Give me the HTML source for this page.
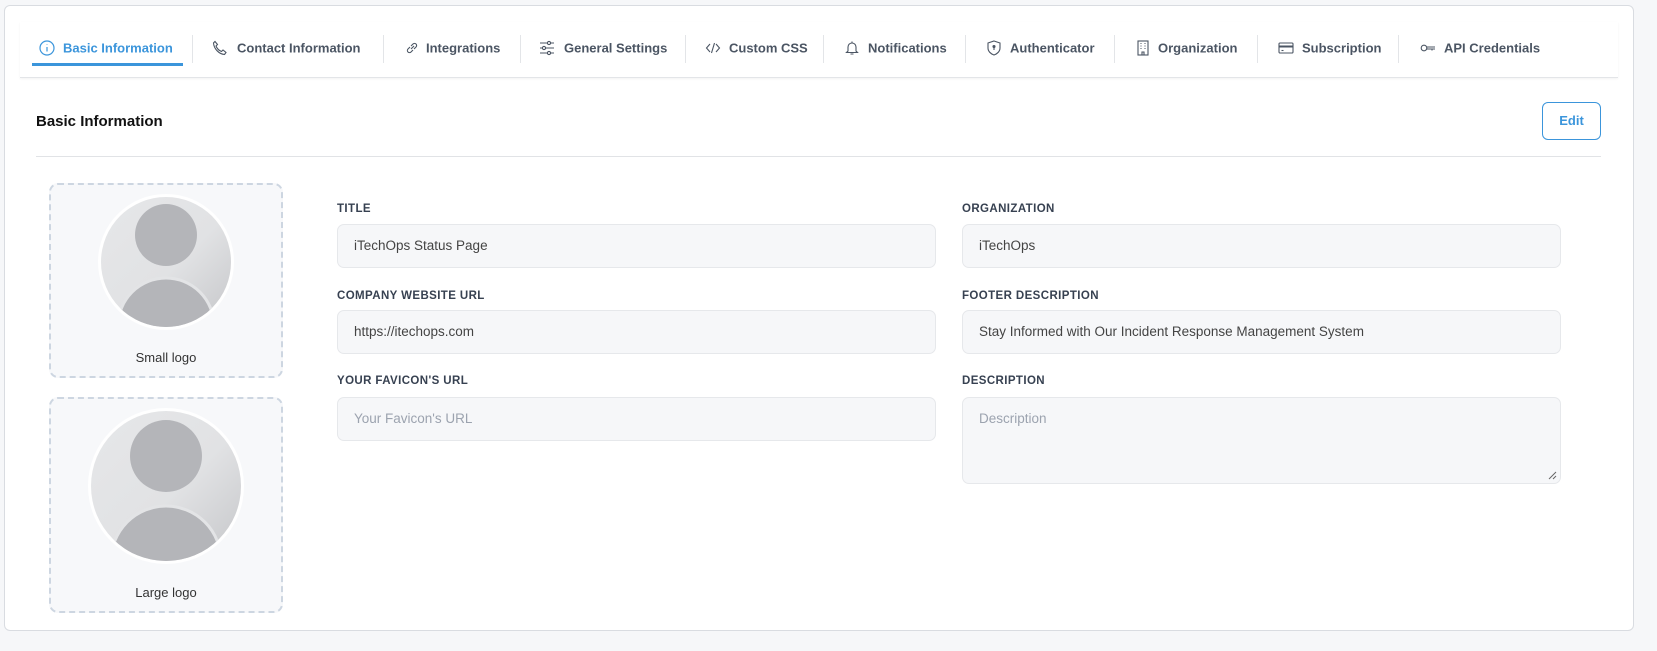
<!DOCTYPE html>
<html><head><meta charset="utf-8"><style>
*{box-sizing:border-box;margin:0;padding:0}
body{width:1657px;height:651px;background:#f6f7f9;font-family:"Liberation Sans",Arial,sans-serif;position:relative;overflow:hidden}
.card{position:absolute;left:4px;top:5px;width:1630px;height:626px;background:#fff;border:1px solid #d9dce1;border-radius:6px}
.tabbar{position:absolute;left:20px;top:22px;width:1598px;height:56px;background:#fff;border-bottom:1px solid #e3e5e8;box-shadow:0 1px 2px rgba(0,0,0,.05)}
.tab{position:absolute;top:48px;font-size:13px;font-weight:600;color:#4b5563;white-space:nowrap;transform:translateY(-50%)}
.ico{position:absolute;top:40px;width:16px;height:16px}
.sep{position:absolute;top:35px;width:1px;height:28px;background:#e3e5e8}
.ul{position:absolute;left:32px;top:63px;width:151px;height:3px;background:#3b95db}
.h{position:absolute;left:36px;top:113px;font-size:15px;font-weight:700;color:#111}
.edit{position:absolute;left:1542px;top:102px;width:59px;height:38px;border:1px solid #3b95db;border-radius:6px;color:#3b95db;font-size:13px;font-weight:700;text-align:center;line-height:36px}
.div{position:absolute;left:36px;top:156px;width:1565px;height:1px;background:#e1e3e6}
.box{position:absolute;left:49px;width:234px;background:#f7f8fa;border:2px dashed #cdd6e1;border-radius:9px}
.cap{position:absolute;left:0;width:100%;text-align:center;font-size:13px;color:#333}
.lbl{position:absolute;font-size:11.5px;font-weight:600;color:#374151;letter-spacing:.4px}
.inp{position:absolute;width:599px;height:44px;background:#f6f7f9;border:1px solid #e6e8eb;border-radius:7px;font-size:13.5px;color:#444;padding-left:16px;line-height:42px}
.ph{color:#9ca3af}
</style></head><body>
<div class="card"></div>
<div class="tabbar"></div>
<div class="ul"></div>
<svg class="ico" style="left:39px" viewBox="0 0 16 16" fill="none" stroke="#3b95db" stroke-width="1.2"><circle cx="8" cy="8" r="7"/><path d="M8 7v4.5M8 4.5v.5"/></svg>
<div class="tab" style="left:63px;color:#3b95db">Basic Information</div>
<div class="sep" style="left:192px"></div>
<svg class="ico" style="left:212px" viewBox="0 0 16 16" fill="none" stroke="#4b5563" stroke-width="1.1"><path d="M3 1.5l2.5 3-1.5 1.5c1 2.5 3 4.5 5.5 5.5l1.5-1.5 3 2.5-1.5 2C7 14 2 9 1.5 3z"/></svg>
<div class="tab" style="left:237px">Contact Information</div>
<div class="sep" style="left:383px"></div>
<svg class="ico" style="left:404px" viewBox="0 0 16 16" fill="none" stroke="#4b5563" stroke-width="1.1"><path d="M7 9l3-3M6 7l-2 2a2 2 0 003 3l2-2M10 9l2-2a2 2 0 00-3-3L7 6"/></svg>
<div class="tab" style="left:426px">Integrations</div>
<div class="sep" style="left:520px"></div>
<svg class="ico" style="left:539px" viewBox="0 0 16 16" fill="none" stroke="#4b5563" stroke-width="1.1"><path d="M1 3h14M1 8h14M1 13h14"/><circle cx="10" cy="3" r="1.6" fill="#fff"/><circle cx="5" cy="8" r="1.6" fill="#fff"/><circle cx="10" cy="13" r="1.6" fill="#fff"/></svg>
<div class="tab" style="left:564px">General Settings</div>
<div class="sep" style="left:685px"></div>
<svg class="ico" style="left:705px" viewBox="0 0 16 16" fill="none" stroke="#4b5563" stroke-width="1.1"><path d="M5 4L1.5 8 5 12M11 4l3.5 4-3.5 4M9.5 3l-3 10"/></svg>
<div class="tab" style="left:729px">Custom CSS</div>
<div class="sep" style="left:823px"></div>
<svg class="ico" style="left:844px" viewBox="0 0 16 16" fill="none" stroke="#4b5563" stroke-width="1.1"><path d="M4 11V7a4 4 0 018 0v4l1.5 1.5h-11zM6.5 14h3M8 1.5v1.5"/></svg>
<div class="tab" style="left:868px">Notifications</div>
<div class="sep" style="left:965px"></div>
<svg class="ico" style="left:986px" viewBox="0 0 16 16" fill="none" stroke="#4b5563" stroke-width="1.1"><path d="M8 1l6 2v5c0 3.5-3 6-6 7-3-1-6-3.5-6-7V3z"/><circle cx="8" cy="6.5" r="1" fill="#4b5563"/><path d="M8 7v3"/></svg>
<div class="tab" style="left:1010px">Authenticator</div>
<div class="sep" style="left:1114px"></div>
<svg class="ico" style="left:1135px" viewBox="0 0 16 16" fill="none" stroke="#4b5563" stroke-width="1.1"><rect x="3" y="1" width="10" height="14"/><path d="M5.5 3.5h1M9.5 3.5h1M5.5 6h1M9.5 6h1M5.5 8.5h1M9.5 8.5h1M7 15v-3h2v3"/></svg>
<div class="tab" style="left:1158px">Organization</div>
<div class="sep" style="left:1257px"></div>
<svg class="ico" style="left:1278px" viewBox="0 0 16 16" fill="none" stroke="#4b5563" stroke-width="1.1"><rect x="1" y="3" width="14" height="10" rx="1"/><path d="M1 6.5h14" stroke-width="2"/><path d="M3.5 10.5h2"/></svg>
<div class="tab" style="left:1302px">Subscription</div>
<div class="sep" style="left:1398px"></div>
<svg class="ico" style="left:1420px" viewBox="0 0 16 16" fill="none" stroke="#4b5563" stroke-width="1.1"><circle cx="4" cy="8" r="2.8"/><path d="M7 7h8M7 9h8M12 9v1.5"/></svg>
<div class="tab" style="left:1444px">API Credentials</div>

<div class="h">Basic Information</div>
<div class="edit">Edit</div>
<div class="div"></div>

<svg width="0" height="0" style="position:absolute"><defs><linearGradient id="g" x1="0" y1="0" x2="1" y2="1"><stop offset="0" stop-color="#e6e7e9"/><stop offset=".55" stop-color="#e1e2e4"/><stop offset="1" stop-color="#c5c6c9"/></linearGradient></defs></svg>
<div class="box" style="top:183px;height:195px">
<svg style="position:absolute;left:47px;top:9px" width="136" height="136" viewBox="0 0 136 136"><circle cx="68" cy="68" r="68" fill="#fff"/><circle cx="68" cy="68" r="65" fill="url(#g)"/><clipPath id="c1"><circle cx="68" cy="68" r="65"/></clipPath><g clip-path="url(#c1)" fill="#b4b5b9"><ellipse cx="68" cy="132" rx="48" ry="48" stroke="#e3e4e6" stroke-width="3"/><circle cx="68" cy="41" r="31"/></g></svg>
<div class="cap" style="top:165px">Small logo</div></div>
<div class="box" style="top:397px;height:216px">
<svg style="position:absolute;left:37px;top:9px" width="156" height="156" viewBox="0 0 156 156"><circle cx="78" cy="78" r="78" fill="#fff"/><circle cx="78" cy="78" r="75" fill="url(#g)"/><clipPath id="c2"><circle cx="78" cy="78" r="75"/></clipPath><g clip-path="url(#c2)" fill="#b4b5b9"><ellipse cx="78" cy="153" rx="55" ry="55" stroke="#e3e4e6" stroke-width="3"/><circle cx="78" cy="48" r="36"/></g></svg>
<div class="cap" style="top:186px">Large logo</div></div>

<div class="lbl" style="left:337px;top:203px">TITLE</div>
<div class="inp" style="left:337px;top:224px">iTechOps Status Page</div>
<div class="lbl" style="left:337px;top:290px">COMPANY WEBSITE URL</div>
<div class="inp" style="left:337px;top:310px">https://itechops.com</div>
<div class="lbl" style="left:337px;top:375px">YOUR FAVICON'S URL</div>
<div class="inp ph" style="left:337px;top:397px">Your Favicon's URL</div>

<div class="lbl" style="left:962px;top:203px">ORGANIZATION</div>
<div class="inp" style="left:962px;top:224px">iTechOps</div>
<div class="lbl" style="left:962px;top:290px">FOOTER DESCRIPTION</div>
<div class="inp" style="left:962px;top:310px">Stay Informed with Our Incident Response Management System</div>
<div class="lbl" style="left:962px;top:375px">DESCRIPTION</div>
<div class="inp ph" style="left:962px;top:397px;height:87px">Description
<svg style="position:absolute;right:3px;bottom:3px" width="9" height="9" viewBox="0 0 9 9" stroke="#666" stroke-width="1"><path d="M1 8L8 1M5 8L8 5"/></svg></div>
</body></html>
